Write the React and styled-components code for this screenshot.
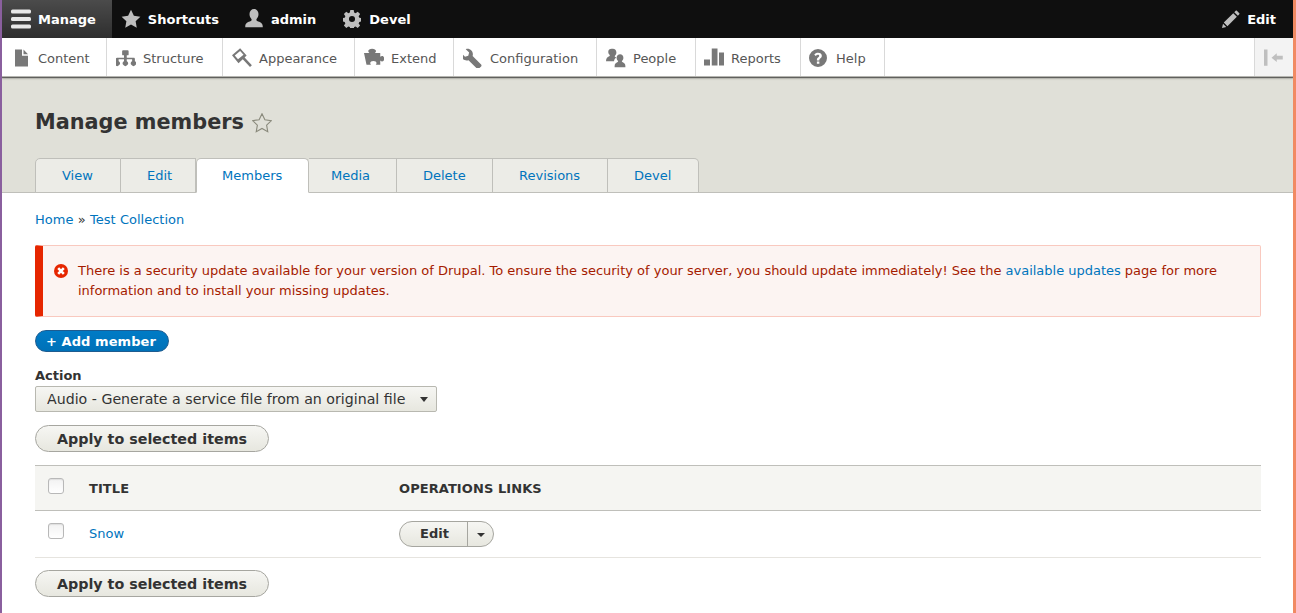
import React from "react";
import styled, { createGlobalStyle } from "styled-components";

const Global = createGlobalStyle`
  html, body { margin: 0; padding: 0; background: #fff; }
  body { font-family: "DejaVu Sans", "Liberation Sans", sans-serif; font-size: 13px; color: #333; }
  * { box-sizing: border-box; }
  a { color: #0074bd; text-decoration: none; }
`;

const Page = styled.div`
  width: 1296px; height: 613px; overflow: hidden;
  border-left: 2px solid #8a5f9e; border-right: 3px solid #f18a63;
  background: #fff;
`;
const TopBar = styled.div`
  height: 38px; background: #0f0f0f; display: flex; align-items: stretch;
`;
const TopItem = styled.a`
  display: flex; align-items: center; gap: ${p => p.$gap || 7}px;
  padding: 0 ${p => p.$pr || 13}px 0 ${p => p.$pl || 9}px;
  color: #fff; font-weight: 700; font-size: 13px;
  background: ${p => p.$active ? "linear-gradient(rgba(255,255,255,.25), rgba(255,255,255,.13) 100%)" : "transparent"};
  ${p => p.$end ? "margin-left: auto;" : ""}
`;
const Tray = styled.div`
  height: 39px; background: #fff; display: flex; align-items: stretch;
  box-shadow: 0 1px 1px rgba(0,0,0,.5), 0 2px 2px rgba(0,0,0,.15);
  border-bottom: 1px solid #b5b5b0; position: relative; z-index: 1;
`;
const TrayItem = styled.a`
  display: flex; align-items: center; gap: ${p => p.$gap}px; color: #565656;
  padding: 2px 0 0 ${p => p.$pl}px; border-right: 1px solid #d9d9d9;
  width: ${p => p.$w}px; font-size: 13px;
`;
const TrayToggle = styled.div`
  margin-left: auto; width: 39px; background: #f3f3f3; border-left: 1px solid #d9d9d9;
  display: flex; align-items: center; justify-content: center;
`;
const Header = styled.div`
  background: #e0e0d8; height: 116px; padding: 0 0 0 33px;
  border-bottom: 1px solid #bfbfba; display: flex; flex-direction: column; justify-content: flex-end;
`;
const TitleRow = styled.div`
  display: flex; align-items: center; gap: 8px; margin-bottom: 19px;
`;
const Title = styled.h1`
  margin: 0; font-size: 20.8px; line-height: 33px; font-weight: 700; color: #333;
`;
const Tabs = styled.div`
  display: flex; align-items: stretch; height: 35px; margin-bottom: -1px;
`;
const Tab = styled.a`
  display: flex; align-items: center;
  width: ${p => p.$w}px; height: 35px; font-size: 13px; color: #0074bd;
  padding-left: ${p => p.$pl}px;
  background: ${p => p.$active ? "#fff" : "#ecece7"};
  border: 1px solid #bfbfba; border-left-width: ${p => p.$first || p.$active ? 1 : 0}px;
  border-bottom: ${p => p.$active ? "1px solid #fff" : "1px solid #bfbfba"};
  border-radius: ${p => p.$active ? "5px 5px 0 0" : p.$first ? "5px 0 0 0" : p.$last ? "0 5px 0 0" : "0"};
`;
const Content = styled.div`
  padding: 0 32px 0 33px;
`;
const Breadcrumb = styled.div`
  margin-top: 18px; height: 18px; line-height: 18px; color: #333; font-size: 13px; word-spacing: .2px;
`;
const Message = styled.div`
  margin-top: 16px; height: 72px; background: #fcf4f2; color: #a51b00;
  border: 1px solid #f9c9bf; border-left: 8px solid #e62600; border-radius: 2px;
  padding: 15px 20px 0 35px; line-height: 20px; font-size: 13px; position: relative; letter-spacing: -.01px;
  a { color: #0074bd; }
`;
const MessageIcon = styled.svg`
  position: absolute; left: 11px; top: 18px; width: 14px; height: 14px;
`;
const AddButton = styled.a`
  display: flex; align-items: center; justify-content: center; margin-top: 13px;
  width: 134px; height: 22px; border-radius: 20px; color: #fff; font-weight: 700; font-size: 13px;
  padding-right: 2px; letter-spacing: .08px;
  background: linear-gradient(#007bc6, #0071b8); border: 1px solid #1e5c90;
`;
const ActionBlock = styled.div`
  margin-top: 15px;
`;
const Label = styled.label`
  display: block; font-weight: 700; font-size: 13px; line-height: 18px; color: #333;
`;
const SelectWrap = styled.div`
  position: relative; width: 402px; height: 26px; margin-top: 1px;
  &::after {
    content: ""; position: absolute; right: 9px; top: 11px; border-style: solid;
    border-width: 5px 4px 0 4px; border-color: #333 transparent transparent transparent;
  }
`;
const Select = styled.select`
  appearance: none; display: block; width: 100%; height: 100%; padding: 0 0 0 11px;
  font: 14.18px "DejaVu Sans", sans-serif; color: #333; border: 1px solid #b8b8b0; border-radius: 2px;
  background: linear-gradient(#f6f6f3, #e7e7df);
`;
const Button = styled.button`
  display: block; width: 234px; height: 27px; margin-top: ${p => p.$mt}px; padding: 0;
  font: 700 14.3px "DejaVu Sans", sans-serif; color: #333; border: 1px solid #a6a6a0; border-radius: 20px;
  background: linear-gradient(#f6f6f3, #e7e7df);
`;
const Table = styled.table`
  width: 100%; margin-top: 13px; border-collapse: collapse; table-layout: fixed;
`;
const Th = styled.th`
  background: #f5f5f2; height: 45px; border-top: 1px solid #bfbfba; border-bottom: 1px solid #bfbfba;
  text-align: left; padding: 0; font-size: 13px; font-weight: 700; color: #333; letter-spacing: .08px;
  width: ${p => p.$w ? p.$w + "px" : "auto"};
`;
const Td = styled.td`
  height: 47px; border-bottom: 1px solid #e6e4df; padding: 0; font-size: 13px;
`;
const RowLink = styled.a`
  display: block; margin-top: -2px;
`;
const Check = styled.input.attrs({ type: "checkbox" })`
  appearance: none; display: block; width: 16px; height: 16px; margin: ${p => p.$top}px 0 0 13px;
  border: 1px solid #b8b8b8; border-radius: 3px; background: linear-gradient(#f2f2f2, #fff);
  box-shadow: inset 0 1px 1px rgba(0,0,0,.08);
`;
const Drop = styled.div`
  display: flex; width: 95px; height: 26px; border: 1px solid #a6a6a0; border-radius: 20px;
  background: linear-gradient(#f6f6f3, #e7e7df); overflow: hidden;
`;
const DropMain = styled.div`
  width: 68px; display: flex; align-items: center; justify-content: center; font-weight: 700; font-size: 13px;
  color: #333; border-right: 1px solid #a6a6a0; padding: 0 0 2px 2px;
`;
const DropArrow = styled.div`
  flex: 1; display: flex; align-items: center; justify-content: center; padding-top: 2px;
  &::after {
    content: ""; border-style: solid; border-width: 4px 4px 0 4px;
    border-color: #333 transparent transparent transparent;
  }
`;

const Ico = ({ d, size = 20, fill = "#787878" }) => (
  <svg width={size} height={size} viewBox="0 0 16 16" style={{ flex: "none" }}>
    <path fill={fill} fillRule="evenodd" d={d} />
  </svg>
);

const icons = {
  content: "M3.2 1.2h5.6v5h4.8v8.6h-10.4zM10 1.2l3.6 3.8h-3.6z",
  structure: "M6.6 1.8h2.8c.4 0 .7.3.7.7v2.6c0 .4-.3.7-.7.7h-.8v1.9h5.6c.5 0 .9.4.9.9v2h.2a2.1 2.1 0 1 1-2.6 0h.2v-1.6h-4.3v1.6h.2a2.1 2.1 0 1 1-2.6 0h.2v-1.6h-4.3v1.6h.2a2.1 2.1 0 1 1-2.6 0h.2v-2c0-.5.4-.9.9-.9h5.6v-1.9h-.8c-.4 0-.7-.3-.7-.7v-2.6c0-.4.3-.7.7-.7z",
  appearance: "M6.5 .2l5.2 5.8-1.6 1.5 5.8 6.2-1.5 1.5-5.8-6.3-3.4 3.2-5.2-6.4zM2.2 6l2.6 3 4.4-3.6-2.7-3.1z",
  extend: "M0 4h4.3c-.6-.5-.9-1-.9-1.6 0-1.1 1.3-1.9 3.1-1.9s3.1.8 3.1 1.9c0 .6-.3 1.1-.9 1.6h4.3v3c.5-.5 1-.7 1.5-.7 1.1 0 1.6.9 1.6 2.2s-.5 2.2-1.6 2.2c-.5 0-1-.2-1.5-.7v3.4h-3.6c.4-.5.6-.9.6-1.4 0-1-1-1.7-2.5-1.7s-2.5.7-2.5 1.7c0 .5.2.9.6 1.4h-3.6z",
  config: "M14.5 13.2l-6.8-6.8c.5-1.6.1-3.3-1-4.5-1.2-1.2-3-1.6-4.5-1l2.7 2.7-.7 2.6-2.6.7-2.7-2.7c-.6 1.5-.2 3.3 1 4.5 1.2 1.2 2.9 1.5 4.5 1l6.8 6.8c.4.4 1.1.4 1.5 0l1.8-1.8c.4-.4.4-1.1 0-1.5z",
  people: "M5.5 .6c1.7 0 2.8 1.3 2.8 3 0 1.1-.4 2-1.1 2.6-.3.3-.2.8.2 1 .3.1.6.3.9.4-1.2.6-1.7 1.6-1.9 3h-6.4c0-2.2.9-3.3 2.6-4 .5-.2.6-.7.2-1.2-.7-.6-1-1.5-1-2.4 0-1.5 1.1-2.4 2.7-2.4zM11.3 4.9c1.5 0 2.6 1.2 2.6 2.8 0 1-.4 1.8-1 2.4-.3.3-.2.8.2 1 1.4.6 2.4 1.4 2.4 3.3v1h-8.6v-1c0-1.9 1-2.7 2.4-3.3.4-.2.5-.7.2-1-.6-.6-1-1.4-1-2.4 0-1.6 1.2-2.8 2.8-2.8z",
  reports: "M0 9.2h4.8v4.8h-4.8zM6.2 .4h4.6v13.6h-4.6zM12 3.6h4v10.4h-4z",
  help: "M8 0a8 8 0 1 0 0 16 8 8 0 0 0 0-16zM7 13v-2h2.2v2zM9.2 9.8v.4h-2.2v-.8c0-1.8 2.1-2 2.1-3.2 0-.6-.5-1-1.2-1-.7 0-1.3.4-1.8 1l-1.4-1.2c.8-1 2-1.6 3.4-1.6 1.9 0 3.3 1 3.3 2.7 0 2.1-2.2 2.3-2.2 3.7z",
  star: "M8 .6l2.3 4.8 5.2.7-3.8 3.6.9 5.2-4.6-2.5-4.6 2.5.9-5.2-3.8-3.6 5.2-.7z",
  user: "M8 0c2 0 3.6 1.6 3.6 4 0 1.6-.6 3-1.4 3.8-.5.6-.4 1.4.3 1.7 2.3.9 4.5 1.5 4.5 4.5v.5h-14v-.5c0-3 2.2-3.6 4.5-4.5.7-.3.8-1.1.3-1.7-.8-.8-1.4-2.2-1.4-3.8 0-2.4 1.6-4 3.6-4z",
  gear: "M6.5 0h3l.4 2.2 1.3.6 1.9-1.3 2.1 2.1-1.3 1.9.6 1.3 2.2.4v3l-2.2.4-.6 1.3 1.3 1.9-2.1 2.1-1.9-1.3-1.3.6-.4 2.2h-3l-.4-2.2-1.3-.6-1.9 1.3-2.1-2.1 1.3-1.9-.6-1.3-2.2-.4v-3l2.2-.4.6-1.3-1.3-1.9 2.1-2.1 1.9 1.3 1.3-.6zM8 5.3a2.7 2.7 0 1 0 0 5.4 2.7 2.7 0 0 0 0-5.4z",
  pencil: "M13.2 .6l2.2 2.2c.3.3.3.7 0 1l-1.3 1.3-3.2-3.2 1.3-1.3c.3-.3.7-.3 1 0zM10 2.8l3.2 3.2-8.4 8.4-3.2-3.2zM.9 12.2l2.9 2.9-3.8 .9z",
  collapse: "M0 2h2.8v13h-2.8zM10.2 5v2h4.8v3h-4.8v2l-4.2-3.5z"
};

const Burger = () => (
  <svg width="20" height="20" viewBox="0 0 20 20" style={{ flex: "none" }}>
    <g fill="#e8e8e8">
      <rect x="0" y="0.5" width="20" height="4" rx="1.5" />
      <rect x="0" y="8" width="20" height="4" rx="1.5" />
      <rect x="0" y="15.5" width="20" height="4" rx="1.5" />
    </g>
  </svg>
);

const trayItems = [
  ["content", "Content", 105, 9, 7, 20],
  ["structure", "Structure", 116, 9, 7, 20],
  ["appearance", "Appearance", 132, 9, 7, 20],
  ["extend", "Extend", 99, 9, 7, 20],
  ["config", "Configuration", 143, 9, 7, 20],
  ["people", "People", 99, 9, 7, 20],
  ["reports", "Reports", 105, 8, 7, 20],
  ["help", "Help", 84, 8, 9, 18]
];
const tabItems = [["View", 86, 26], ["Edit", 75, 26], ["Members", 113, 25], ["Media", 88, 22], ["Delete", 96, 26], ["Revisions", 115, 26], ["Devel", 91, 26]];

export default function App() {
  return (
    <>
      <Global />
      <Page>
        <TopBar>
          <TopItem $active $pl={9} $pr={16} $gap={7} href="#"><Burger />Manage</TopItem>
          <TopItem $pl={9} $pr={12} $gap={7} href="#"><Ico d={icons.star} fill="#bebebe" />Shortcuts</TopItem>
          <TopItem $pl={13} $pr={14} $gap={7} href="#"><Ico d={icons.user} fill="#bebebe" />admin</TopItem>
          <TopItem $pl={13} $pr={13} $gap={8} href="#"><Ico d={icons.gear} size={18} fill="#bebebe" />Devel</TopItem>
          <TopItem $end $pl={9} $pr={17} $gap={7} href="#"><Ico d={icons.pencil} size={18} fill="#bebebe" />Edit</TopItem>
        </TopBar>
        <Tray>
          {trayItems.map(([ic, label, w, pl, gap, size]) => (
            <TrayItem key={label} $w={w} $pl={pl} $gap={gap} href="#"><Ico d={icons[ic]} size={size} />{label}</TrayItem>
          ))}
          <TrayToggle><Ico d={icons.collapse} fill="#bfbfbf" /></TrayToggle>
        </Tray>
        <Header>
          <TitleRow>
            <Title>Manage members</Title>
            <svg width="20" height="20" viewBox="0 0 16 16"><path fill="none" stroke="#8a8a7c" strokeWidth=".9" d={icons.star} /></svg>
          </TitleRow>
          <Tabs>
            {tabItems.map(([label, w, pl], i) => (
              <Tab key={label} $w={w} $pl={pl} $active={label === "Members"} $first={i === 0} $last={i === tabItems.length - 1} href="#">{label}</Tab>
            ))}
          </Tabs>
        </Header>
        <Content>
          <Breadcrumb><a href="#">Home</a> » <a href="#">Test Collection</a></Breadcrumb>
          <Message>
            <MessageIcon viewBox="0 0 14 14">
              <circle cx="7" cy="7" r="7" fill="#e62600" />
              <path stroke="#fff" strokeWidth="2.6" d="M4.2 4.2l5.6 5.6M9.8 4.2l-5.6 5.6" />
            </MessageIcon>
            There is a security update available for your version of Drupal. To ensure the security of your server, you should update immediately! See the <a href="#">available updates</a> page for more information and to install your missing updates.
          </Message>
          <AddButton href="#">+ Add member</AddButton>
          <ActionBlock>
            <Label>Action</Label>
            <SelectWrap>
              <Select defaultValue="a"><option value="a">Audio - Generate a service file from an original file</option></Select>
            </SelectWrap>
          </ActionBlock>
          <Button $mt={13}>Apply to selected items</Button>
          <Table>
            <thead>
              <tr>
                <Th $w={54}><Check $top={-5} /></Th>
                <Th $w={310}>TITLE</Th>
                <Th>OPERATIONS LINKS</Th>
              </tr>
            </thead>
            <tbody>
              <tr>
                <Td><Check $top={-6} /></Td>
                <Td><RowLink href="#">Snow</RowLink></Td>
                <Td><Drop><DropMain>Edit</DropMain><DropArrow /></Drop></Td>
              </tr>
            </tbody>
          </Table>
          <Button $mt={12}>Apply to selected items</Button>
        </Content>
      </Page>
    </>
  );
}
